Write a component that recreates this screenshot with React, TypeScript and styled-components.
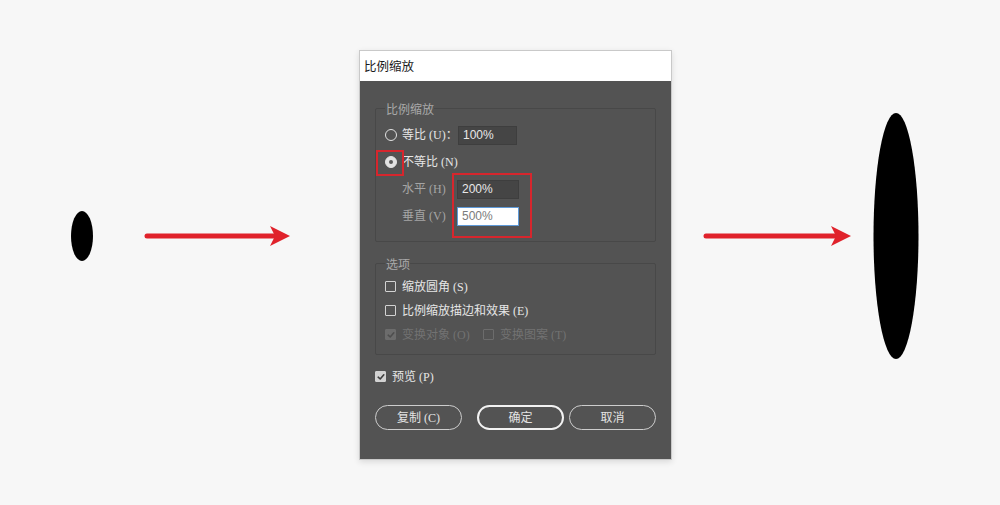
import React from "react";
import styled, { createGlobalStyle, css } from "styled-components";

const GlobalStyle = createGlobalStyle`
	html, body {
		margin: 0;
		padding: 0;
		background: #f7f7f7;
	}
	body {
		font-family: "Liberation Serif", "Noto Sans CJK SC", serif;
	}
`;

const Stage = styled.main`
	height: 472px;
	display: flex;
	align-items: center;
	padding-left: 71px;
`;

const Shape = styled.svg<{ $gap: number }>`
	display: block;
	flex: none;
	margin-left: ${(p) => p.$gap}px;
`;

const Dialog = styled.section`
	position: relative;
	flex: none;
	width: 311px;
	margin-left: 69px;
	margin-top: 37px;
	border: 1px solid #c9c9c9;
	background: #535353;
	box-shadow: 0 2px 6px rgba(0, 0, 0, 0.12);
`;

const TitleBar = styled.header`
	height: 30px;
	display: flex;
	align-items: center;
	padding-left: 4px;
	background: #ffffff;
	color: #1b1b1b;
	font-family: "Noto Sans CJK SC", sans-serif;
	font-size: 12.5px;
`;

const Body = styled.div`
	padding: 21px 15px 29px 15px;
	display: flex;
	flex-direction: column;
`;

const Group = styled.fieldset<{ $top?: number; $pt: number; $pb: number }>`
	margin: ${(p) => p.$top ?? 0}px 0 0 0;
	padding: ${(p) => p.$pt}px 8px ${(p) => p.$pb}px 9px;
	border: 1px solid #484848;
	border-radius: 2px;
	min-width: 0;

	legend {
		margin-left: 0;
		padding: 0 0 0 1px;
		color: #a9a9a9;
		font-size: 12px;
		line-height: 14px;
		font-family: "Noto Sans CJK SC", sans-serif;
	}
`;

const Row = styled.div<{ $h?: number; $indent?: number }>`
	height: ${(p) => p.$h ?? 24}px;
	display: flex;
	align-items: center;
	padding-left: ${(p) => p.$indent ?? 0}px;
`;

const Label = styled.span<{ $tone?: "normal" | "dim" | "off"; $w?: number }>`
	font-size: 12px;
	line-height: 14px;
	white-space: nowrap;
	width: ${(p) => (p.$w ? `${p.$w}px` : "auto")};
	color: ${(p) =>
		p.$tone === "dim" ? "#a5a5a5" : p.$tone === "off" ? "#727272" : "#e6e6e6"};
`;

const Radio = styled.span<{ $on?: boolean }>`
	flex: none;
	box-sizing: border-box;
	width: 12px;
	height: 12px;
	margin-right: 5px;
	border-radius: 50%;
	border: 1.5px solid #e2e2e2;
	display: grid;
	place-items: center;
	${(p) =>
		p.$on &&
		css`
			background: #e2e2e2;
			&::after {
				content: "";
				width: 4px;
				height: 4px;
				border-radius: 50%;
				background: #5a5a5a;
			}
		`}
`;

const Box = styled.span<{ $on?: boolean; $off?: boolean }>`
	flex: none;
	box-sizing: border-box;
	width: 11px;
	height: 11px;
	margin-right: 6px;
	border-radius: 1px;
	border: 1px solid ${(p) => (p.$off ? "#6c6c6c" : "#d2d2d2")};
	background: ${(p) => (p.$on ? (p.$off ? "#6c6c6c" : "#d2d2d2") : "transparent")};
	display: grid;
	place-items: center;
`;

const Field = styled.span<{ $w: number; $light?: boolean }>`
	flex: none;
	box-sizing: border-box;
	width: ${(p) => p.$w}px;
	height: 19px;
	padding-left: 4px;
	display: flex;
	align-items: center;
	font-family: "Liberation Sans", sans-serif;
	font-size: 12px;
	${(p) =>
		p.$light
			? css`
					background: #ffffff;
					border: 1px solid #5f9ad8;
					color: #7b7b7b;
			  `
			: css`
					background: #454545;
					border: 1px solid #3e3e3e;
					color: #e8e8e8;
			  `}
`;

const Buttons = styled.div`
	display: flex;
	margin-top: 16px;
`;

const Button = styled.button<{ $primary?: boolean; $gap?: number }>`
	box-sizing: border-box;
	width: 87px;
	height: 25px;
	margin-left: ${(p) => p.$gap ?? 0}px;
	border-radius: 13px;
	background: transparent;
	border: ${(p) => (p.$primary ? "2px solid #f2f2f2" : "1.5px solid #cdcdcd")};
	color: #e3e3e3;
	font-family: "Liberation Serif", "Noto Sans CJK SC", serif;
	font-size: 12px;
	padding: 0;
`;

const Mark = styled.div<{ $x: number; $y: number; $w: number; $h: number }>`
	position: absolute;
	left: ${(p) => p.$x}px;
	top: ${(p) => p.$y}px;
	width: ${(p) => p.$w}px;
	height: ${(p) => p.$h}px;
	box-sizing: border-box;
	border: 2px solid #d7262d;
	pointer-events: none;
`;

const Check: React.FC<{ color: string }> = ({ color }) => (
	<svg width="8" height="8" viewBox="0 0 8 8">
		<path d="M1.2 4.2 L3.2 6 L6.8 1.8" fill="none" stroke={color} strokeWidth="1.6" strokeLinecap="round" strokeLinejoin="round" />
	</svg>
);

const Arrow: React.FC<{ width: number; gap: number }> = ({ width, gap }) => (
	<Shape $gap={gap} width={width} height={24} viewBox={`0 0 ${width} 24`}>
		<line x1="3" y1="12" x2={width - 14} y2="12" stroke="#e0222b" strokeWidth="5" strokeLinecap="round" />
		<polygon points={`${width - 20},2 ${width},12 ${width - 20},22 ${width - 15},12`} fill="#e0222b" />
	</Shape>
);

const App: React.FC = () => {
	return (
		<>
			<GlobalStyle />
			<Stage>
				<Shape $gap={0} width={22} height={50} viewBox="0 0 22 50">
					<ellipse cx="11" cy="25" rx="11" ry="25" fill="#000" />
				</Shape>
				<Arrow width={146} gap={51} />

				<Dialog>
					<TitleBar>比例缩放</TitleBar>
					<Body>
						<Group $pt={6} $pb={11}>
							<legend>比例缩放</legend>
							<Row $h={27}>
								<Radio />
								<Label $w={56}>等比 (U)：</Label>
								<Field $w={59}>100%</Field>
							</Row>
							<Row $h={27}>
								<Radio $on />
								<Label>不等比 (N)</Label>
							</Row>
							<Row $h={27} $indent={17}>
								<Label $tone="dim" $w={55}>水平 (H)</Label>
								<Field $w={62}>200%</Field>
							</Row>
							<Row $h={27} $indent={17}>
								<Label $tone="dim" $w={55}>垂直 (V)</Label>
								<Field $w={62} $light>500%</Field>
							</Row>
						</Group>

						<Group $top={15} $pt={4} $pb={7}>
							<legend>选项</legend>
							<Row>
								<Box />
								<Label>缩放圆角 (S)</Label>
							</Row>
							<Row>
								<Box />
								<Label>比例缩放描边和效果 (E)</Label>
							</Row>
							<Row>
								<Box $on $off>
									<Check color="#4e4e4e" />
								</Box>
								<Label $tone="off" $w={81}>变换对象 (O)</Label>
								<Box $off />
								<Label $tone="off">变换图案 (T)</Label>
							</Row>
						</Group>

						<Row style={{ marginTop: 10 }}>
							<Box $on>
								<Check color="#3e3e3e" />
							</Box>
							<Label>预览 (P)</Label>
						</Row>

						<Buttons>
							<Button>复制 (C)</Button>
							<Button $primary $gap={15}>确定</Button>
							<Button $gap={5}>取消</Button>
						</Buttons>
					</Body>

					<Mark $x={16} $y={99} $w={28} $h={26} />
					<Mark $x={92} $y={122} $w={80} $h={65} />
				</Dialog>

				<Arrow width={148} gap={31} />
				<Shape $gap={22} width={46} height={246} viewBox="0 0 46 246">
					<ellipse cx="23" cy="123" rx="22.5" ry="123" fill="#000" />
				</Shape>
			</Stage>
		</>
	);
};

export default App;
